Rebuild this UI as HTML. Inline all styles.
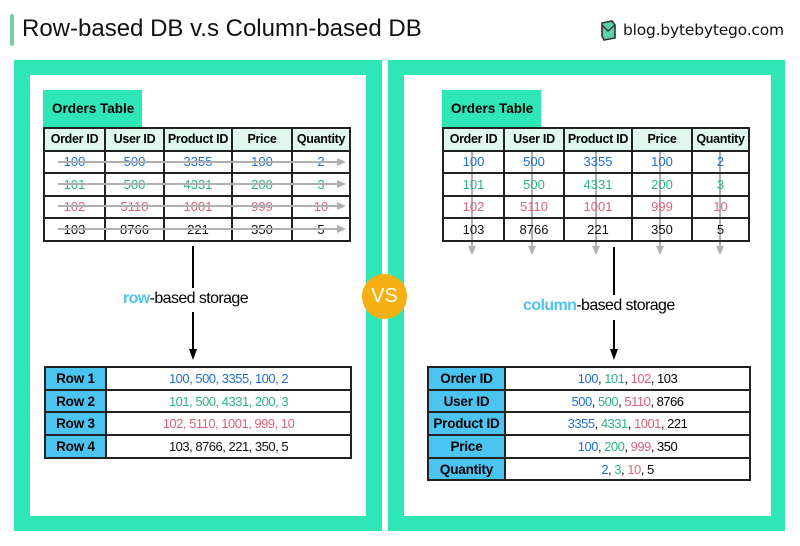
<!DOCTYPE html>
<html><head><meta charset="utf-8"><style>
*{margin:0;padding:0;box-sizing:border-box}
body{width:800px;height:546px;background:#fff;position:relative;overflow:hidden;font-family:"Liberation Sans",sans-serif}
.a{position:absolute}
.g{background:#2ee6b6}
.w{background:#fff}
table{border-collapse:collapse;position:absolute;font-size:13px}
td{border:2px solid #222;text-align:center;padding:0;height:22.5px}
.h td{background:#e0f8ee;font-weight:bold;font-size:12.5px;letter-spacing:-0.3px}
.b{color:#1f6fd1}.gr{color:#2fb384}.r{color:#d8647c}.k{color:#111}
.bt td{height:22.7px;font-size:13px;letter-spacing:-0.5px}
.bt td:first-child{background:#4cc4f2;font-weight:bold;font-size:13.5px;letter-spacing:-0.2px}
.tab{position:absolute;background:#2ee6b6;font-weight:bold;font-size:13.5px;padding-left:9px;line-height:37px}
</style></head><body>
<div class="a" style="left:10px;top:14px;width:4px;height:32px;background:#74d3a6;border-radius:2px"></div>
<div class="a" style="left:22px;top:15px;font-size:24px;color:#111">Row-based DB v.s Column-based DB</div>
<svg class="a" style="left:600px;top:19px" width="17" height="23" viewBox="0 0 17 23"><path d="M2 4 L12 2 L15 6 L15 19 L4 21 L2 17 Z" fill="#5fd3a8" stroke="#333" stroke-width="1.6"/><path d="M2 6 L8 12 L15 6" fill="none" stroke="#333" stroke-width="1.4"/></svg>
<div class="a" style="left:623px;top:21px;font-size:15.5px;color:#111;font-family:'DejaVu Sans',sans-serif;letter-spacing:-0.2px">blog.bytebytego.com</div>

<div class="a g" style="left:14px;top:60px;width:368px;height:471px"></div>
<div class="a w" style="left:30px;top:75px;width:336px;height:441px"></div>
<div class="a g" style="left:388px;top:60px;width:397px;height:471px"></div>
<div class="a w" style="left:404px;top:75px;width:367px;height:441px"></div>

<div class="tab" style="left:43px;top:90px;width:99px;height:37px">Orders Table</div>
<table style="left:43px;top:127px;width:308px">
<tr class="h"><td style="width:61px">Order ID</td><td style="width:59px">User ID</td><td style="width:68px">Product ID</td><td style="width:60px">Price</td><td>Quantity</td></tr>
<tr class="b"><td>100</td><td>500</td><td>3355</td><td>100</td><td>2</td></tr>
<tr class="gr"><td>101</td><td>500</td><td>4331</td><td>200</td><td>3</td></tr>
<tr class="r"><td>102</td><td>5110</td><td>1001</td><td>999</td><td>10</td></tr>
<tr class="k"><td>103</td><td>8766</td><td>221</td><td>350</td><td>5</td></tr>
</table>
<svg class="a" style="left:0;top:0" width="800" height="546">
<g stroke="#b0b0b0" stroke-width="2" fill="#b0b0b0">
<line x1="58" y1="162" x2="338" y2="162"/><path d="M346 162 L337 158 L337 166Z" stroke="none"/>
<line x1="58" y1="184" x2="338" y2="184"/><path d="M346 184 L337 180 L337 188Z" stroke="none"/>
<line x1="58" y1="206" x2="338" y2="206"/><path d="M346 206 L337 202 L337 210Z" stroke="none"/>
<line x1="58" y1="229" x2="338" y2="229"/><path d="M346 229 L337 225 L337 233Z" stroke="none"/>
<line x1="472" y1="150" x2="472" y2="247"/><path d="M472 255 L468 246 L476 246Z" stroke="none"/>
<line x1="532" y1="150" x2="532" y2="247"/><path d="M532 255 L528 246 L536 246Z" stroke="none"/>
<line x1="596" y1="150" x2="596" y2="247"/><path d="M596 255 L592 246 L600 246Z" stroke="none"/>
<line x1="660" y1="150" x2="660" y2="247"/><path d="M660 255 L656 246 L664 246Z" stroke="none"/>
<line x1="720" y1="150" x2="720" y2="247"/><path d="M720 255 L716 246 L724 246Z" stroke="none"/>
</g>
<g stroke="#000" stroke-width="2" fill="#000">
<line x1="193" y1="246" x2="193" y2="288"/><line x1="193" y1="312" x2="193" y2="350"/><path d="M193 360 L189 349 L197 349Z" stroke="none"/>
<line x1="614" y1="247" x2="614" y2="295"/><line x1="614" y1="320" x2="614" y2="350"/><path d="M614 360 L610 349 L618 349Z" stroke="none"/>
</g>
</svg>
<div class="a" style="left:123px;top:290px;font-size:16px;letter-spacing:-0.6px"><b style="color:#4fc3f0">row</b>-based storage</div>
<table class="bt" style="left:44px;top:366px;width:308px">
<tr><td style="width:61px">Row 1</td><td class="b">100, 500, 3355, 100, 2</td></tr>
<tr><td>Row 2</td><td class="gr">101, 500, 4331, 200, 3</td></tr>
<tr><td>Row 3</td><td class="r">102, 5110, 1001, 999, 10</td></tr>
<tr><td>Row 4</td><td class="k">103, 8766, 221, 350, 5</td></tr>
</table>

<div class="tab" style="left:442px;top:90px;width:99px;height:37px">Orders Table</div>
<table style="left:442px;top:127px;width:308px">
<tr class="h"><td style="width:61px">Order ID</td><td style="width:60px">User ID</td><td style="width:68px">Product ID</td><td style="width:60px">Price</td><td>Quantity</td></tr>
<tr class="b"><td>100</td><td>500</td><td>3355</td><td>100</td><td>2</td></tr>
<tr class="gr"><td>101</td><td>500</td><td>4331</td><td>200</td><td>3</td></tr>
<tr class="r"><td>102</td><td>5110</td><td>1001</td><td>999</td><td>10</td></tr>
<tr class="k"><td>103</td><td>8766</td><td>221</td><td>350</td><td>5</td></tr>
</table>
<div class="a" style="left:521px;top:297px;font-size:16px;letter-spacing:-0.6px;background:#fff;padding:0 2px"><b style="color:#4fc3f0">column</b>-based storage</div>
<table class="bt" style="left:427px;top:366px;width:324px">
<tr><td style="width:77px">Order ID</td><td><span class="b">100</span>, <span class="gr">101</span>, <span class="r">102</span>, 103</td></tr>
<tr><td>User ID</td><td><span class="b">500</span>, <span class="gr">500</span>, <span class="r">5110</span>, 8766</td></tr>
<tr><td>Product ID</td><td><span class="b">3355</span>, <span class="gr">4331</span>, <span class="r">1001</span>, 221</td></tr>
<tr><td>Price</td><td><span class="b">100</span>, <span class="gr">200</span>, <span class="r">999</span>, 350</td></tr>
<tr><td>Quantity</td><td><span class="b">2</span>, <span class="gr">3</span>, <span class="r">10</span>, 5</td></tr>
</table>

<div class="a" style="left:362px;top:274px;width:45px;height:45px;border-radius:50%;background:#f6b012;color:#fff;font-size:20px;text-align:center;line-height:45px">VS</div>
</body></html>
